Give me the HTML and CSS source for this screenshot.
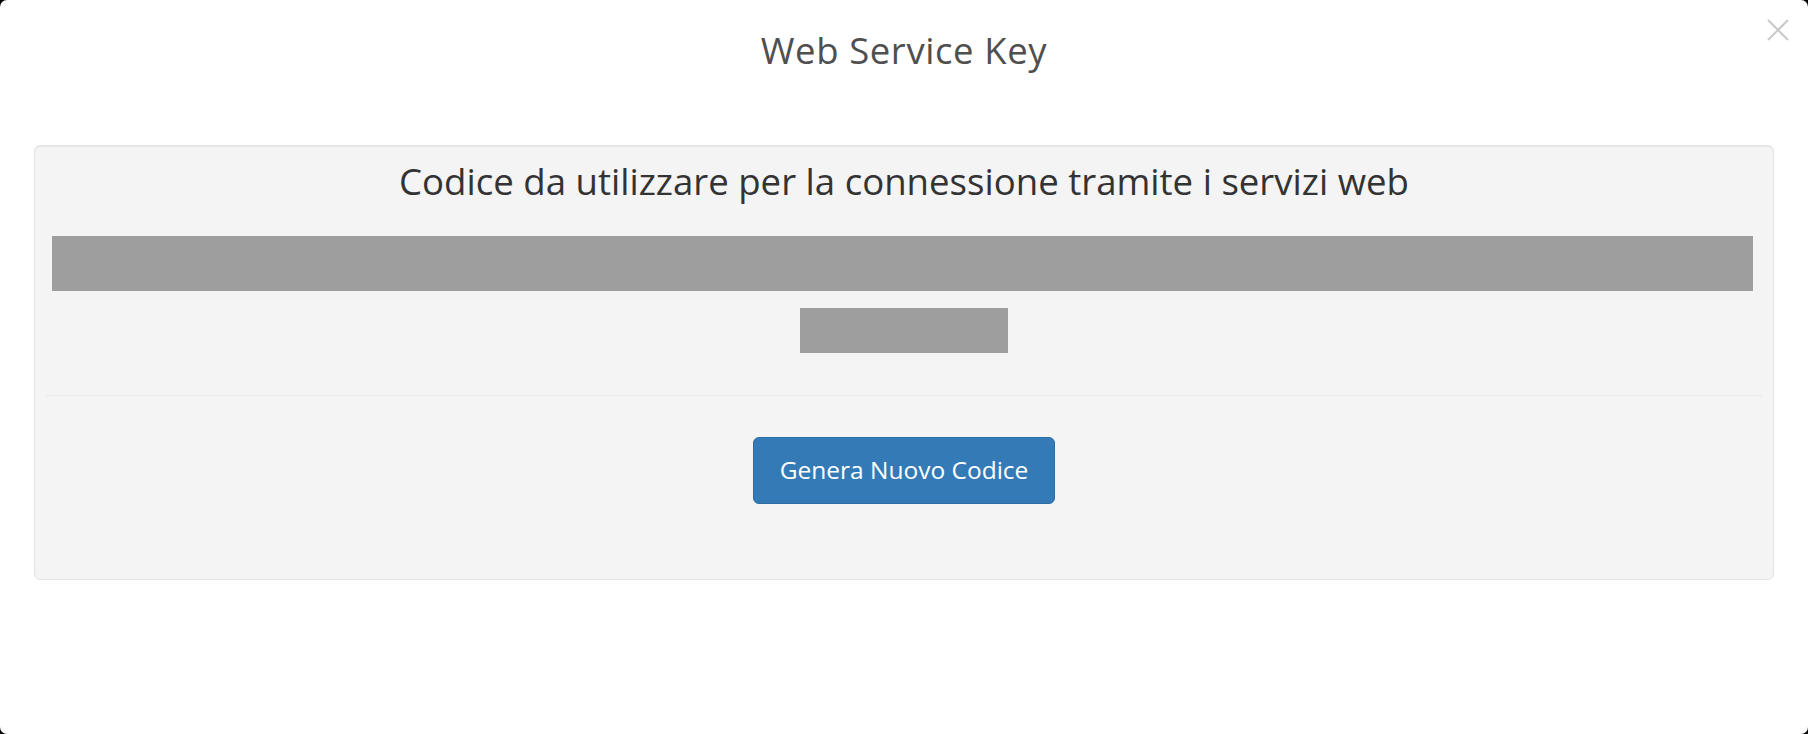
FILE: index.html
```html
<!DOCTYPE html>
<html lang="it">
<head>
<meta charset="utf-8">
<title>Web Service Key</title>
<link rel="stylesheet" href="styles.css">
</head>
<body>
<div class="modal">
  <div class="modal-header">
    <h4 class="modal-title">Web Service Key</h4>
    <button class="close" type="button" aria-label="Chiudi">
      <svg width="22" height="22" viewBox="0 0 22 22" aria-hidden="true">
        <path d="M1 1 L21 21 M21 1 L1 21" stroke="#c9c9c9" stroke-width="2" fill="none"/>
      </svg>
    </button>
  </div>
  <div class="modal-body">
    <div class="well">
      <h3 class="well-title">Codice da utilizzare per la connessione tramite i servizi web</h3>
      <div class="key">
        <div class="redact redact-line1"></div>
        <div class="redact redact-line2"></div>
      </div>
      <hr class="divider">
      <div class="actions">
        <button class="btn-primary" type="button">Genera Nuovo Codice</button>
      </div>
    </div>
  </div>
</div>
</body>
</html>
```
FILE: styles.css
```css
html, body {
  margin: 0;
  padding: 0;
  height: 100%;
}
body {
  background: #000;
  font-family: "Open Sans", "Noto Sans", "DejaVu Sans", sans-serif;
  overflow: hidden;
}
.modal {
  position: relative;
  width: 1808px;
  height: 734px;
  background: #fff;
  border-radius: 7px;
  box-sizing: border-box;
}
.modal-header {
  padding-top: 30px;
  display: flex;
  justify-content: center;
}
.modal-title {
  margin: 0;
  font-size: 36.5px;
  letter-spacing: 0.6px;
  line-height: 40px;
  font-weight: 400;
  color: #4f4f4f;
}
.close {
  position: absolute;
  top: 19px;
  right: 19px;
  width: 22px;
  height: 22px;
  padding: 0;
  border: 0;
  background: transparent;
  display: block;
}
.close svg {
  display: block;
}
.modal-body {
  padding: 75px 34px 0;
}
.well {
  background: #f4f4f4;
  border: 1px solid #e3e3e3;
  border-radius: 6px;
  box-shadow: inset 0 1px 1px rgba(0, 0, 0, 0.05);
  padding: 15px 11px 75px;
}
.well-title {
  margin: 0;
  text-align: center;
  font-size: 36.6px;
  line-height: 40px;
  font-weight: 400;
  color: #333;
}
.key {
  margin-top: 35px;
  display: flex;
  flex-direction: column;
  align-items: center;
  gap: 17px;
}
.redact {
  background: #9e9e9e;
}
.redact-line1 {
  align-self: flex-start;
  margin-left: 6px;
  width: 1701px;
  height: 55px;
}
.redact-line2 {
  width: 208px;
  height: 45px;
}
.divider {
  margin: 42px 0 0;
  border: 0;
  border-top: 1px solid #e8e8e8;
  height: 0;
}
.actions {
  margin-top: 41px;
  display: flex;
  justify-content: center;
}
.btn-primary {
  height: 67px;
  padding: 0 26px;
  box-sizing: border-box;
  display: flex;
  align-items: center;
  justify-content: center;
  background: #337ab7;
  border: 1px solid #2e6da4;
  border-radius: 6px;
  color: #fff;
  font-family: "Open Sans", "Noto Sans", "DejaVu Sans", sans-serif;
  font-size: 24.5px;
  font-weight: 400;
  line-height: 1;
}
```
